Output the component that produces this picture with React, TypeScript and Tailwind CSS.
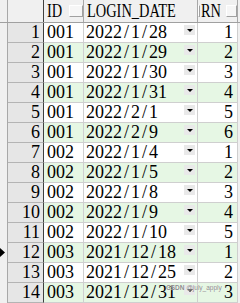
const rows: [string, string, string][] = [
  ['001', '2022/1/28', '1'],
  ['001', '2022/1/29', '2'],
  ['001', '2022/1/30', '3'],
  ['001', '2022/1/31', '4'],
  ['001', '2022/2/1', '5'],
  ['001', '2022/2/9', '6'],
  ['002', '2022/1/4', '1'],
  ['002', '2022/1/5', '2'],
  ['002', '2022/1/8', '3'],
  ['002', '2022/1/9', '4'],
  ['002', '2022/1/10', '5'],
  ['003', '2021/12/18', '1'],
  ['003', '2021/12/25', '2'],
  ['003', '2021/12/31', '3'],
]

// half-width cells, like the grid's SimSun text
const Cells = ({ text }: { text: string }) => (
  <span className="inline-flex">
    {text.split('').map((c, i) => (
      <span key={i} className="inline-block w-[9px] text-center">
        {c}
      </span>
    ))}
  </span>
)

const HeaderCell = ({ label, w }: { label: string; w: string }) => (
  <div className={`${w} h-[22px] flex border-r border-[#a8a8a8] pl-[3px]`}>
    <span className="inline-block origin-left scale-x-[0.8] leading-[23px] whitespace-nowrap">{label}</span>
    <div className="ml-auto mt-[5px] w-[14px] h-[12px] bg-[#f6f6f6] border-t border-l border-t-white border-l-white border-b border-r border-b-[#a0a0a0] border-r-[#a0a0a0]" />
  </div>
)

export default function App() {
  return (
    <div className="relative w-[240px] h-[303px] overflow-hidden bg-[#f0f0f0] text-[18px] text-black font-['Liberation_Serif',serif]">
      <div className="flex h-[23px] border-b border-[#a0a0a0]">
        <div className="w-[8px] h-[22px] border-r border-[#a8a8a8]" />
        <div className="w-[36px] h-[22px] border-r border-[#404040]" />
        <HeaderCell label="ID" w="w-[40px]" />
        <HeaderCell label="LOGIN_DATE" w="w-[114px]" />
        <HeaderCell label="RN" w="w-[40px]" />
      </div>
      {rows.map(([id, date, rn], i) => {
        const bg = i % 2 === 1 ? 'bg-[#e6f7e4]' : 'bg-white'
        return (
          <div key={i} className="flex h-[20px] leading-[19px]">
            <div className="w-[8px] h-[20px] border-r border-[#a8a8a8] flex items-center">
              {i === 11 && (
                <svg width="5" height="9" viewBox="0 0 5 9" className="mt-[-1px]">
                  <path d="M0 0 L5 4.5 L0 9 Z" fill="#000" />
                </svg>
              )}
            </div>
            <div className="w-[36px] h-[20px] bg-[#e6e6e6] border-r border-[#404040] border-b border-b-[#b4b4b4] text-right pr-[3px]">
              {i + 1}
            </div>
            <div className={`w-[40px] h-[20px] ${bg} border-r border-b border-[#cfcfcf] pl-[3px]`}>
              <Cells text={id} />
            </div>
            <div className={`w-[114px] h-[20px] ${bg} border-r border-b border-[#cfcfcf] pl-[2px] flex`}>
              <Cells text={date} />
              <div className="ml-auto mr-[2px] mt-[2px] w-[11px] h-[10px] bg-[#e9e9e9] flex items-center justify-center">
                <div className="w-0 h-0 border-l-[3px] border-r-[3px] border-t-[3px] border-l-transparent border-r-transparent border-t-black" />
              </div>
            </div>
            <div className={`w-[40px] h-[20px] ${bg} border-r border-b border-[#cfcfcf] text-right pr-[4px]`}>
              {rn}
            </div>
          </div>
        )
      })}
      <div className="absolute left-[166px] top-[284px] text-[6.5px] leading-[8px] text-[#8c8c8c] font-['Liberation_Sans',sans-serif] [text-shadow:0_0_1px_#fff]">
        <span className="font-bold">CSDN</span> @july_apply
      </div>
    </div>
  )
}
